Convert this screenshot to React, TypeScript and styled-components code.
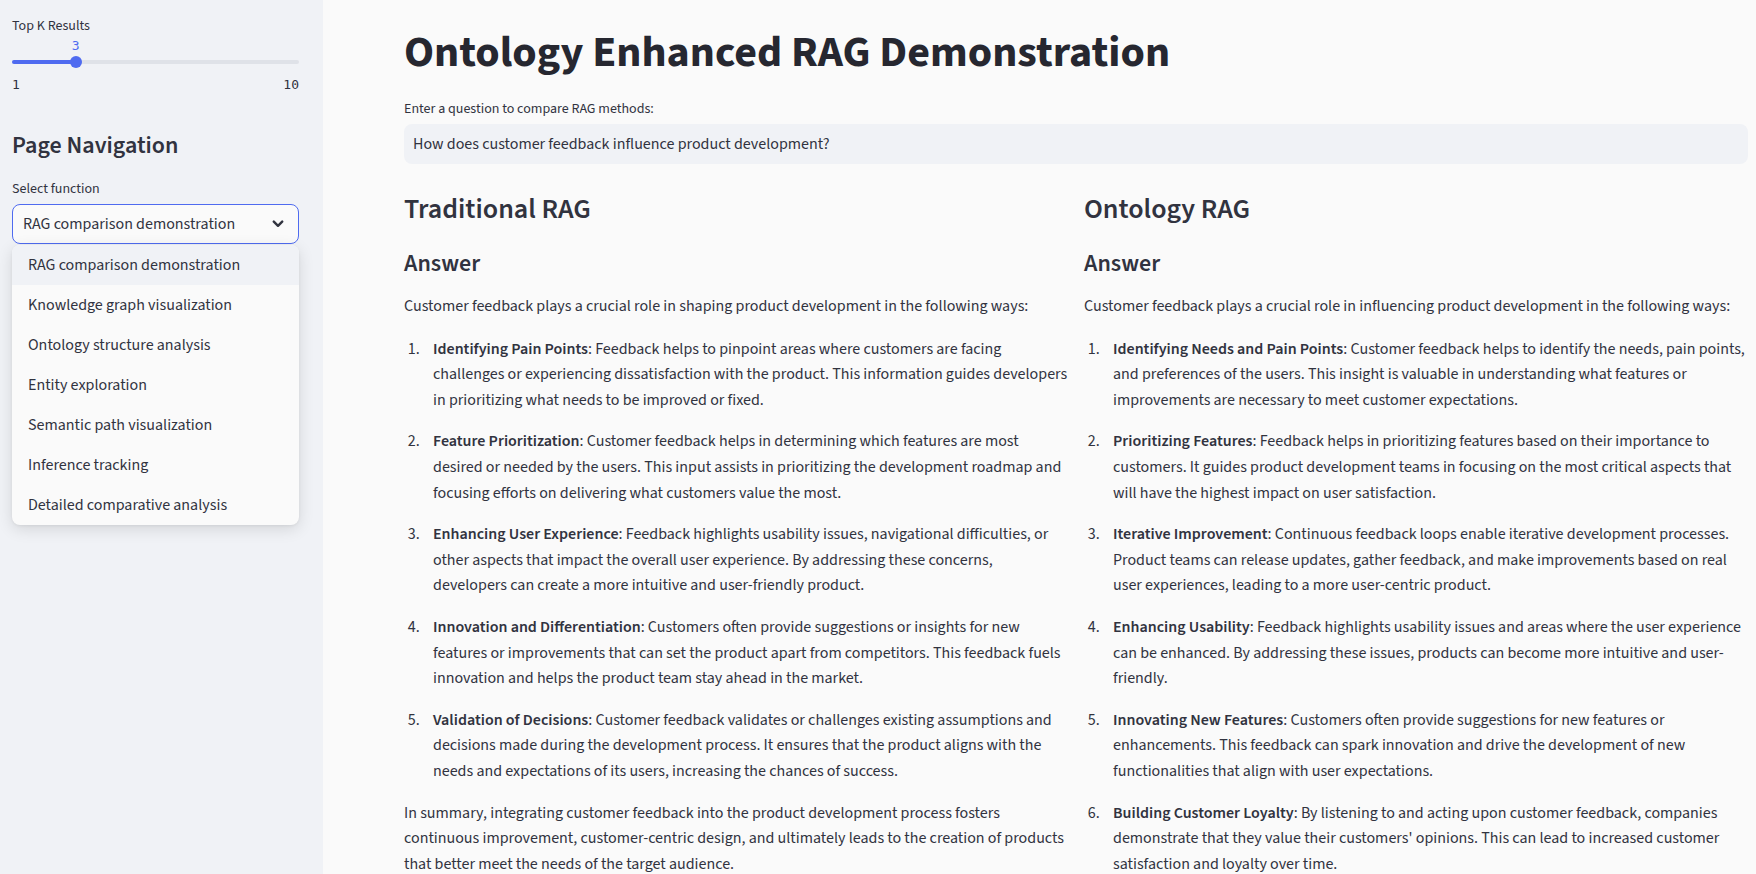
import React from "react";
import styled, { createGlobalStyle } from "styled-components";

const GlobalStyle = createGlobalStyle`
  html, body { margin: 0; padding: 0; height: 100%; overflow: hidden; }
  body {
    font-family: "Source Sans 3", "Source Sans Pro", "Noto Sans", sans-serif;
    color: #31333f;
    background: #fafafa;
    -webkit-font-smoothing: antialiased;
  }
  #root { height: 100%; }
`;

const PRIMARY = "#4f6bf0";

const Shell = styled.div`
  display: flex;
  height: 100vh;
  overflow: hidden;
`;

const Sidebar = styled.aside`
  width: 323px;
  flex: 0 0 323px;
  background: #f0f2f6;
  padding: 16px 24px 0 12px;
  box-sizing: border-box;
  display: flex;
  flex-direction: column;
  & > * { flex-shrink: 0; }
`;

const WidgetLabel = styled.div<{ $mt?: number }>`
  font-size: 14px;
  line-height: 20px;
  height: 20px;
  margin-top: ${(p) => p.$mt ?? 0}px;
  color: #31333f;
`;

const SliderBox = styled.div`
  margin-top: 2px;
  display: flex;
  flex-direction: column;
`;

const ValueRow = styled.div`
  position: relative;
  height: 16px;
`;

const ThumbValue = styled.span`
  position: absolute;
  top: 0;
  transform: translateX(-50%);
  font-family: "DejaVu Sans Mono", "Liberation Mono", monospace;
  font-size: 13px;
  line-height: 16px;
  color: ${PRIMARY};
`;

const TrackArea = styled.div`
  position: relative;
  height: 16px;
  display: flex;
  align-items: center;
`;

const Track = styled.div`
  position: relative;
  width: 100%;
  height: 4px;
  border-radius: 2px;
  background: #dfe2e8;
`;

const TrackFill = styled.div`
  position: absolute;
  left: 0;
  top: 0;
  height: 100%;
  border-radius: 2px;
  background: ${PRIMARY};
`;

const Thumb = styled.div`
  position: absolute;
  top: 50%;
  width: 12px;
  height: 12px;
  border-radius: 50%;
  background: ${PRIMARY};
  transform: translate(-50%, -50%);
`;

const TickRow = styled.div`
  margin-top: 7px;
  display: flex;
  justify-content: space-between;
  font-family: "DejaVu Sans Mono", "Liberation Mono", monospace;
  font-size: 13px;
  line-height: 16px;
  color: #31333f;
`;

const SideHeading = styled.h2`
  margin: 38px 0 0;
  font-size: 24px;
  line-height: 30px;
  font-weight: 600;
  color: #31333f;
`;

const SelectWrap = styled.div`
  position: relative;
  margin-top: 5px;
`;

const SelectBox = styled.div`
  box-sizing: border-box;
  height: 40px;
  border: 1px solid ${PRIMARY};
  border-radius: 8px;
  background: #fafafa;
  display: flex;
  align-items: center;
  justify-content: space-between;
  padding: 0 14px 0 10px;
  font-size: 16px;
`;

const Menu = styled.ul`
  position: absolute;
  top: 41px;
  left: 0;
  right: 0;
  margin: 0;
  padding: 0;
  list-style: none;
  background: #fafafa;
  border-radius: 8px;
  overflow: hidden;
  box-shadow: 0 4px 16px rgba(0, 0, 0, 0.12), 0 1px 3px rgba(0, 0, 0, 0.06);
  z-index: 5;
`;

const MenuItem = styled.li<{ $active?: boolean }>`
  height: 40px;
  display: flex;
  align-items: center;
  padding-left: 16px;
  font-size: 16px;
  background: ${(p) => (p.$active ? "#f0f2f6" : "transparent")};
`;

const Main = styled.main`
  flex: 1;
  min-width: 0;
  padding: 27px 8px 0 81px;
  box-sizing: border-box;
  display: flex;
  flex-direction: column;
  & > * { flex-shrink: 0; }
`;

const Title = styled.h1`
  margin: 0;
  font-size: 44px;
  line-height: 52px;
  font-weight: 700;
  color: #262730;
`;

const InputLabel = styled.label`
  margin-top: 20px;
  font-size: 14px;
  line-height: 20px;
  color: #31333f;
`;

const TextInput = styled.div`
  margin-top: 5px;
  height: 40px;
  box-sizing: border-box;
  background: #f0f2f6;
  border-radius: 8px;
  display: flex;
  align-items: center;
  padding-left: 9px;
  font-size: 16px;
  color: #31333f;
`;

const Columns = styled.div`
  display: grid;
  grid-template-columns: 1fr 1fr;
  column-gap: 16px;
  margin-top: 28px;
`;

const Column = styled.section`
  min-width: 0;
`;

const ColHeading = styled.h3`
  margin: 0;
  font-size: 28px;
  line-height: 34px;
  font-weight: 600;
  color: #31333f;
`;

const SubHeading = styled.h4`
  margin: 23px 0 0;
  font-size: 24px;
  line-height: 30px;
  font-weight: 600;
  color: #31333f;
`;

const Para = styled.p<{ $mt?: number }>`
  margin: ${(p) => p.$mt ?? 0}px 0 0;
  font-size: 16px;
  line-height: 25.6px;
`;

const List = styled.ol`
  margin: 17px 0 0;
  padding-left: 19px;
  font-size: 16px;
  line-height: 25.6px;
`;

const Item = styled.li`
  padding-left: 10px;
  & + & {
    margin-top: 16px;
  }
`;

const Strong = styled.strong`
  font-weight: 600;
`;

const ChevronDown = () => (
  <svg width="12" height="8" viewBox="0 0 12 8" aria-hidden="true">
    <path d="M1.8 1.6 L6 5.8 L10.2 1.6" fill="none" stroke="#31333f" strokeWidth="2.4" strokeLinecap="round" strokeLinejoin="round" />
  </svg>
);

type Point = { title: string; text: string };

const leftPoints: Point[] = [
  { title: "Identifying Pain Points", text: "Feedback helps to pinpoint areas where customers are facing challenges or experiencing dissatisfaction with the product. This information guides developers in prioritizing what needs to be improved or fixed." },
  { title: "Feature Prioritization", text: "Customer feedback helps in determining which features are most desired or needed by the users. This input assists in prioritizing the development roadmap and focusing efforts on delivering what customers value the most." },
  { title: "Enhancing User Experience", text: "Feedback highlights usability issues, navigational difficulties, or other aspects that impact the overall user experience. By addressing these concerns, developers can create a more intuitive and user-friendly product." },
  { title: "Innovation and Differentiation", text: "Customers often provide suggestions or insights for new features or improvements that can set the product apart from competitors. This feedback fuels innovation and helps the product team stay ahead in the market." },
  { title: "Validation of Decisions", text: "Customer feedback validates or challenges existing assumptions and decisions made during the development process. It ensures that the product aligns with the needs and expectations of its users, increasing the chances of success." },
];

const rightPoints: Point[] = [
  { title: "Identifying Needs and Pain Points", text: "Customer feedback helps to identify the needs, pain points, and preferences of the users. This insight is valuable in understanding what features or improvements are necessary to meet customer expectations." },
  { title: "Prioritizing Features", text: "Feedback helps in prioritizing features based on their importance to customers. It guides product development teams in focusing on the most critical aspects that will have the highest impact on user satisfaction." },
  { title: "Iterative Improvement", text: "Continuous feedback loops enable iterative development processes. Product teams can release updates, gather feedback, and make improvements based on real user experiences, leading to a more user-centric product." },
  { title: "Enhancing Usability", text: "Feedback highlights usability issues and areas where the user experience can be enhanced. By addressing these issues, products can become more intuitive and user-friendly." },
  { title: "Innovating New Features", text: "Customers often provide suggestions for new features or enhancements. This feedback can spark innovation and drive the development of new functionalities that align with user expectations." },
  { title: "Building Customer Loyalty", text: "By listening to and acting upon customer feedback, companies demonstrate that they value their customers' opinions. This can lead to increased customer satisfaction and loyalty over time." },
];

const menuOptions = [
  "RAG comparison demonstration",
  "Knowledge graph visualization",
  "Ontology structure analysis",
  "Entity exploration",
  "Semantic path visualization",
  "Inference tracking",
  "Detailed comparative analysis",
];

const AnswerColumn = ({ heading, intro, points, summary }: { heading: string; intro: string; points: Point[]; summary?: string }) => (
  <Column>
    <ColHeading>{heading}</ColHeading>
    <SubHeading>Answer</SubHeading>
    <Para $mt={15}>{intro}</Para>
    <List>
      {points.map((p) => (
        <Item key={p.title}>
          <Strong>{p.title}</Strong>: {p.text}
        </Item>
      ))}
    </List>
    {summary && <Para $mt={16}>{summary}</Para>}
  </Column>
);

export default function App() {
  const min = 1;
  const max = 10;
  const value = 3;
  const pct = ((value - min) / (max - min)) * 100;
  return (
    <>
      <GlobalStyle />
      <Shell>
        <Sidebar>
          <WidgetLabel>Top K Results</WidgetLabel>
          <SliderBox>
            <ValueRow>
              <ThumbValue style={{ left: `${pct}%` }}>{value}</ThumbValue>
            </ValueRow>
            <TrackArea>
              <Track>
                <TrackFill style={{ width: `${pct}%` }} />
                <Thumb style={{ left: `${pct}%` }} />
              </Track>
            </TrackArea>
            <TickRow>
              <span>{min}</span>
              <span>{max}</span>
            </TickRow>
          </SliderBox>
          <SideHeading>Page Navigation</SideHeading>
          <WidgetLabel $mt={18}>Select function</WidgetLabel>
          <SelectWrap>
            <SelectBox>
              <span>RAG comparison demonstration</span>
              <ChevronDown />
            </SelectBox>
            <Menu>
              {menuOptions.map((o, i) => (
                <MenuItem key={o} $active={i === 0}>
                  {o}
                </MenuItem>
              ))}
            </Menu>
          </SelectWrap>
        </Sidebar>
        <Main>
          <Title>Ontology Enhanced RAG Demonstration</Title>
          <InputLabel>Enter a question to compare RAG methods:</InputLabel>
          <TextInput>How does customer feedback influence product development?</TextInput>
          <Columns>
            <AnswerColumn
              heading="Traditional RAG"
              intro="Customer feedback plays a crucial role in shaping product development in the following ways:"
              points={leftPoints}
              summary="In summary, integrating customer feedback into the product development process fosters continuous improvement, customer-centric design, and ultimately leads to the creation of products that better meet the needs of the target audience."
            />
            <AnswerColumn
              heading="Ontology RAG"
              intro="Customer feedback plays a crucial role in influencing product development in the following ways:"
              points={rightPoints}
            />
          </Columns>
        </Main>
      </Shell>
    </>
  );
}
